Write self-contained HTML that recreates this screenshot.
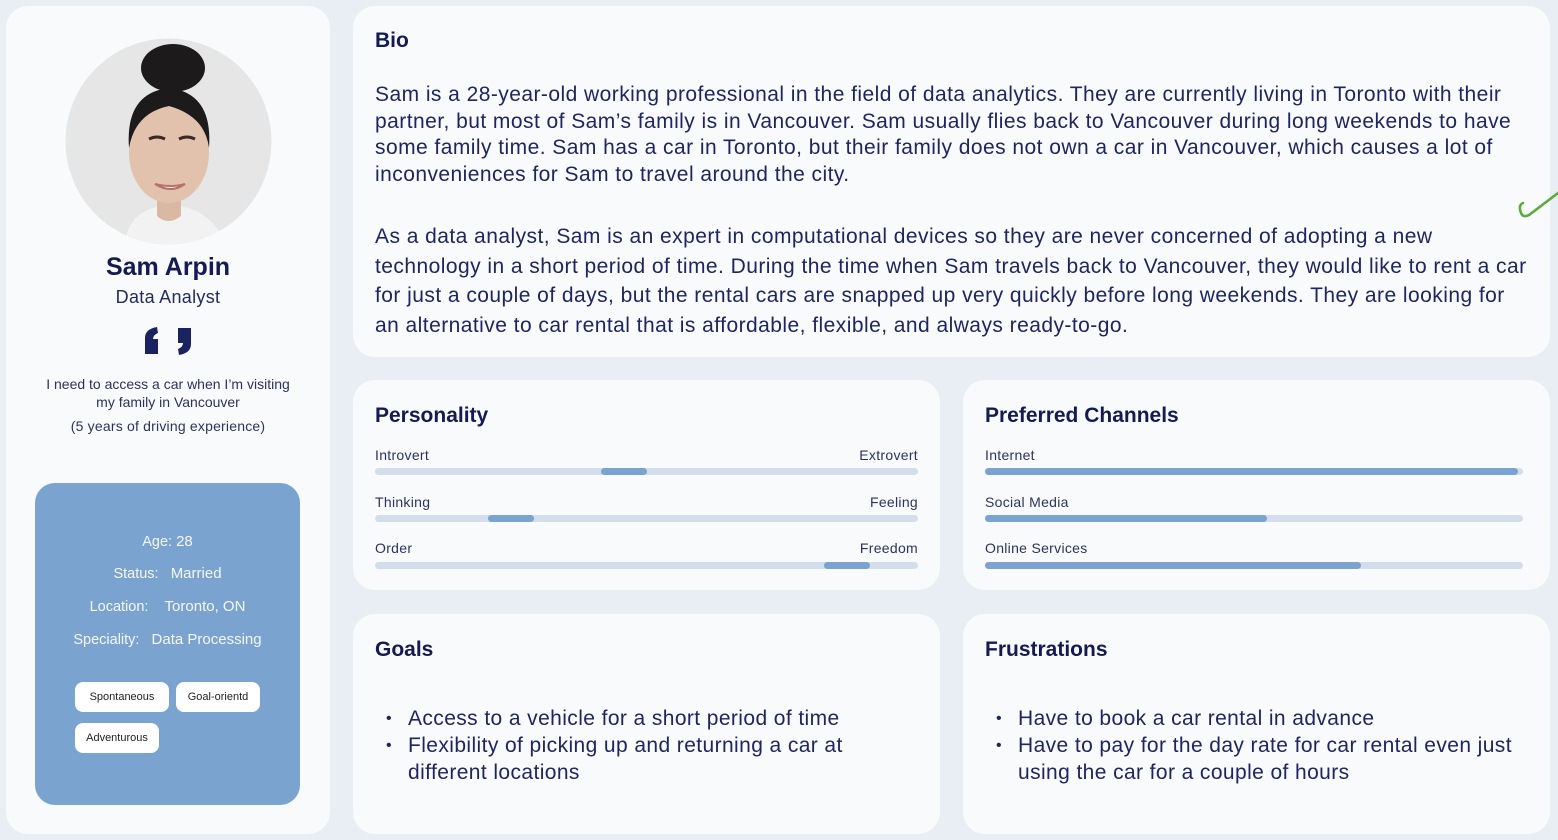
<!DOCTYPE html>
<html><head><meta charset="utf-8"><style>
*{margin:0;padding:0;box-sizing:border-box}
body{width:1558px;height:840px;background:#e9eef4;font-family:"Liberation Sans",sans-serif;color:#1c2158;position:relative;overflow:hidden}
.card{position:absolute;background:#f9fafb;border-radius:22px}
.abs{position:absolute}
h2{position:absolute;font-size:21px;font-weight:bold;color:#141a52}
.lbl{position:absolute;font-size:14px;color:#2c3260;letter-spacing:0.3px}
.track{position:absolute;height:7px;border-radius:4px;background:#d2deeb}
.fill{position:absolute;height:7px;border-radius:4px;background:#7ba3cf}
.bio{position:absolute;left:375px;font-size:21px;color:#1f2560;white-space:nowrap;letter-spacing:0.45px}
ul{position:absolute;list-style:none;font-size:21px;color:#1f2560;line-height:27px;letter-spacing:0.4px}
ul li{position:relative;padding-left:33px}
ul li:before{content:"•";position:absolute;left:11px;font-size:16px}
.tag{position:absolute;background:#fff;border-radius:8px;font-size:11px;color:#222;text-align:center;line-height:30px;height:30px}
.info{position:absolute;left:35px;width:265px;text-align:center;color:#f4f7fb;font-size:14.5px}
.info b{font-weight:normal;font-size:15px}
</style></head><body>
<div class="card" style="left:6px;top:6px;width:324px;height:828px"></div>
<div class="card" style="left:353px;top:6px;width:1197px;height:351px"></div>
<div class="card" style="left:353px;top:380px;width:587px;height:210px"></div>
<div class="card" style="left:963px;top:380px;width:587px;height:210px"></div>
<div class="card" style="left:353px;top:614px;width:587px;height:220px"></div>
<div class="card" style="left:963px;top:614px;width:587px;height:220px"></div>

<svg class="abs" style="left:65px;top:38px" width="207" height="207" viewBox="0 0 207 207">
<defs><clipPath id="c"><circle cx="103.5" cy="103.5" r="103"/></clipPath></defs>
<g clip-path="url(#c)">
<rect width="207" height="207" fill="#e6e6e6"/>
<path d="M60 207 Q62 175 95 168 L115 168 Q150 175 160 207Z" fill="#f2f2f2"/>
<path d="M92 150 L92 178 Q103 188 116 178 L116 150Z" fill="#d9b8a4"/>
<ellipse cx="104" cy="115" rx="40" ry="50" fill="#e2c1ad"/>
<path d="M64 110 Q60 55 104 50 Q148 55 144 110 Q140 78 104 68 Q70 75 64 110Z" fill="#1c1a1a"/>
<ellipse cx="108" cy="30" rx="32" ry="24" fill="#1c1a1a"/>
<path d="M84 101 q8-4 16 0 M114 101 q8-4 16 0" stroke="#3a2b25" stroke-width="3" fill="none"/>
<path d="M90 146 Q106 156 120 146 Q106 150 90 146Z" fill="#fff" stroke="#b7706a" stroke-width="2"/>
</g></svg>

<div class="abs" style="left:6px;width:324px;top:253px;text-align:center;font-size:25px;font-weight:bold;color:#141a52">Sam Arpin</div>
<div class="abs" style="left:6px;width:324px;top:287px;text-align:center;font-size:18px;color:#252b5e;letter-spacing:0.3px">Data Analyst</div>
<svg class="abs" style="left:143px;top:326px" width="50" height="30" viewBox="0 0 50 30">
<path d="M2 28 L2 12 Q2 3 14 1 L15 7 Q10 9 10 13 L15 13 L15 28Z" fill="#1a2260"/>
<path d="M48 2 L48 18 Q48 27 36 29 L35 23 Q40 21 40 17 L35 17 L35 2Z" fill="#1a2260"/>
</svg>
<div class="abs" style="left:6px;width:324px;top:375px;text-align:center;font-size:14px;color:#2c3260;line-height:18px">I need to access a car when I’m visiting<br>my family in Vancouver</div>
<div class="abs" style="left:6px;width:324px;top:418px;text-align:center;font-size:14px;color:#2c3260;letter-spacing:0.2px">(5 years of driving experience)</div>

<div class="abs" style="left:35px;top:483px;width:265px;height:322px;background:#7ba3cf;border-radius:20px"></div>
<div class="info" style="top:533px">Age: <b>28</b></div>
<div class="info" style="top:565px">Status:&nbsp;&nbsp; <b>Married</b></div>
<div class="info" style="top:598px">Location:&nbsp;&nbsp;&nbsp; <b>Toronto, ON</b></div>
<div class="info" style="top:631px">Speciality:&nbsp;&nbsp; <b>Data Processing</b></div>
<div class="tag" style="left:75px;top:682px;width:94px">Spontaneous</div>
<div class="tag" style="left:176px;top:682px;width:84px">Goal-orientd</div>
<div class="tag" style="left:75px;top:723px;width:84px">Adventurous</div>

<h2 style="left:375px;top:29px">Bio</h2>
<div class="bio" style="top:82px;line-height:26.7px">Sam is a 28-year-old working professional in the field of data analytics. They are currently living in Toronto with their<br>partner, but most of Sam’s family is in Vancouver. Sam usually flies back to Vancouver during long weekends to have<br>some family time. Sam has a car in Toronto, but their family does not own a car in Vancouver, which causes a lot of<br>inconveniences for Sam to travel around the city.</div>
<div class="bio" style="top:222px;line-height:29.5px">As a data analyst, Sam is an expert in computational devices so they are never concerned of adopting a new<br>technology in a short period of time. During the time when Sam travels back to Vancouver, they would like to rent a car<br>for just a couple of days, but the rental cars are snapped up very quickly before long weekends. They are looking for<br>an alternative to car rental that is affordable, flexible, and always ready-to-go.</div>
<svg class="abs" style="left:1515px;top:185px" width="43" height="36"><path d="M8 18 Q3 20 6 28 Q8 33 14 30 L43 8" stroke="#5aaa3a" stroke-width="2.5" fill="none" stroke-linecap="round"/></svg>

<h2 style="left:375px;top:404px">Personality</h2>
<div class="lbl" style="left:375px;top:447px">Introvert</div><div class="lbl" style="left:820px;width:98px;text-align:right;top:447px">Extrovert</div>
<div class="track" style="left:375px;top:468px;width:543px"></div><div class="fill" style="left:601px;top:468px;width:46px"></div>
<div class="lbl" style="left:375px;top:494px">Thinking</div><div class="lbl" style="left:820px;width:98px;text-align:right;top:494px">Feeling</div>
<div class="track" style="left:375px;top:515px;width:543px"></div><div class="fill" style="left:488px;top:515px;width:46px"></div>
<div class="lbl" style="left:375px;top:540px">Order</div><div class="lbl" style="left:820px;width:98px;text-align:right;top:540px">Freedom</div>
<div class="track" style="left:375px;top:562px;width:543px"></div><div class="fill" style="left:824px;top:562px;width:46px"></div>

<h2 style="left:985px;top:404px">Preferred Channels</h2>
<div class="lbl" style="left:985px;top:447px">Internet</div>
<div class="track" style="left:985px;top:468px;width:538px"></div><div class="fill" style="left:985px;top:468px;width:533px"></div>
<div class="lbl" style="left:985px;top:494px">Social Media</div>
<div class="track" style="left:985px;top:515px;width:538px"></div><div class="fill" style="left:985px;top:515px;width:282px"></div>
<div class="lbl" style="left:985px;top:540px">Online Services</div>
<div class="track" style="left:985px;top:562px;width:538px"></div><div class="fill" style="left:985px;top:562px;width:376px"></div>

<h2 style="left:375px;top:638px">Goals</h2>
<ul style="left:375px;top:705px;width:540px"><li>Access to a vehicle for a short period of time</li><li>Flexibility of picking up and returning a car at<br>different locations</li></ul>
<h2 style="left:985px;top:638px">Frustrations</h2>
<ul style="left:985px;top:705px;width:560px"><li>Have to book a car rental in advance</li><li>Have to pay for the day rate for car rental even just<br>using the car for a couple of hours</li></ul>
</body></html>
